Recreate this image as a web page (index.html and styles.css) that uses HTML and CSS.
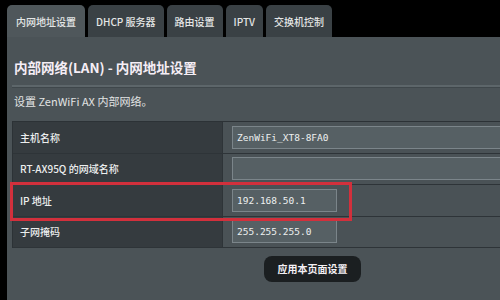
FILE: index.html
```html
<!DOCTYPE html>
<html lang="zh-CN">
<head>
    <meta charset="UTF-8">
    <title>内部网络(LAN) - 内网地址设置</title>
    <link rel="stylesheet" href="styles.css">
</head>
<body>
    <div class="page">
        <div class="tabs">
            <div class="tab active">内网地址设置</div>
            <div class="tab">DHCP 服务器</div>
            <div class="tab">路由设置</div>
            <div class="tab">IPTV</div>
            <div class="tab">交换机控制</div>
        </div>

        <div class="panel">
            <h2 class="title">内部网络(LAN) - 内网地址设置</h2>
            <div class="rule"></div>
            <p class="desc">设置 ZenWiFi AX 内部网络。</p>

            <div class="table">
                <div class="row">
                    <div class="label">主机名称</div>
                    <div class="value"><div class="field wide">ZenWiFi_XT8-8FA0</div></div>
                </div>
                <div class="row">
                    <div class="label">RT-AX95Q 的网域名称</div>
                    <div class="value"><div class="field wide"></div></div>
                </div>
                <div class="row highlight">
                    <div class="label">IP 地址</div>
                    <div class="value"><div class="field">192.168.50.1</div></div>
                </div>
                <div class="row">
                    <div class="label">子网掩码</div>
                    <div class="value"><div class="field">255.255.255.0</div></div>
                </div>
            </div>

            <div class="actions">
                <button class="apply">应用本页面设置</button>
            </div>
        </div>
    </div>
</body>
</html>
```

FILE: styles.css
```css
* {
    margin: 0;
    padding: 0;
    box-sizing: border-box;
}

body {
    background: #000;
    color: #e8eaea;
    font-family: "Noto Sans CJK SC", "Noto Sans", sans-serif;
    width: 500px;
    height: 300px;
    overflow: hidden;
}

.page {
    padding-left: 7px;
}

.tabs {
    display: flex;
    gap: 3px;
    padding-top: 5px;
}

.tab {
    height: 32px;
    padding: 0 8px;
    display: flex;
    align-items: center;
    background: #3a4145;
    border-radius: 5px 5px 0 0;
    font-size: 10px;
    font-weight: 500;
    color: #e4e6e6;
}

.tab.active {
    background: #4f575b;
    padding: 0 9px;
}

.panel {
    background: #4b5357;
    height: 263px;
    padding-left: 5px;
    overflow: hidden;
}

.title {
    font-size: 13.5px;
    font-weight: 700;
    color: #f6eef6;
    line-height: 20px;
    padding: 20px 0 0 2px;
}

.rule {
    height: 3px;
    margin-top: 8px;
    background: #5d666a;
    border-bottom: 1px solid #3f474b;
}

.desc {
    font-size: 11px;
    line-height: 16px;
    padding: 5px 0 0 2px;
    color: #e2e4e4;
}

.table {
    margin-top: 12px;
    border-top: 1px solid #2c3236;
    border-left: 1px solid #2c3236;
}

.row {
    display: grid;
    grid-template-columns: 209px 1fr;
    height: 31.5px;
    border-bottom: 1px solid #2e3438;
}

.label {
    background: #353b3f;
    display: flex;
    align-items: center;
    padding-left: 7px;
    font-size: 10px;
    font-weight: 500;
    color: #eceeee;
}

.value {
    background: #4a5256;
    border-left: 1px solid #2e3438;
    display: flex;
    align-items: center;
    padding-left: 9px;
}

.field {
    width: 105px;
    height: 23px;
    background: #566064;
    border: 1px solid #7b858a;
    padding-left: 4px;
    display: flex;
    align-items: center;
    font-family: "DejaVu Sans Mono", monospace;
    font-size: 9.5px;
    color: #eef0f0;
}

.field.wide {
    width: 300px;
}

.highlight {
    position: relative;
}

.highlight::after {
    content: "";
    position: absolute;
    left: -3px;
    top: -3px;
    width: 336px;
    height: 33px;
    border: 3px solid #d2303c;
}

.actions {
    padding: 6px 0 0 252px;
}

.apply {
    width: 97px;
    height: 26px;
    background: #1b1f21;
    border: none;
    border-radius: 8px;
    color: #f4f0f4;
    font-family: "Noto Sans CJK SC", sans-serif;
    font-size: 10px;
    font-weight: 700;
}
```
